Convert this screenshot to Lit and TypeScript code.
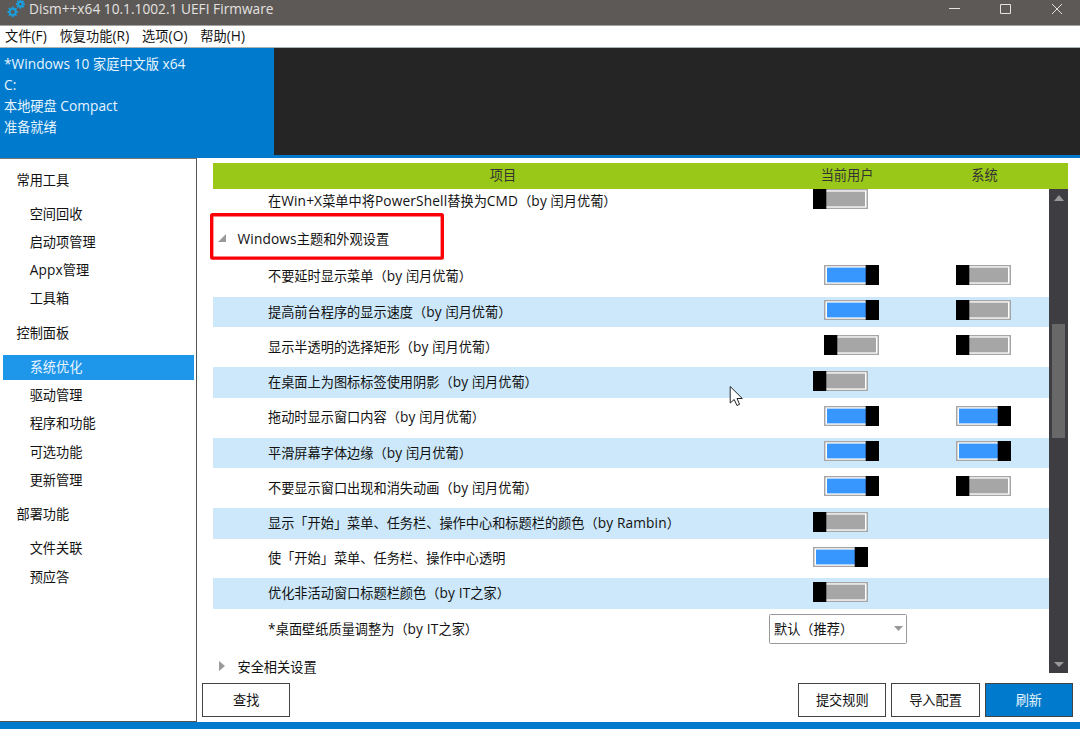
import { LitElement, html, css, svg, nothing } from "lit";
import { customElement, property } from "lit/decorators.js";
import { classMap } from "lit/directives/class-map.js";

type Toggle = boolean | undefined;
interface Row {
  label: string;
  user?: Toggle;
  system?: Toggle;
  choice?: string;
}

const NAV: { title: string; items: string[] }[] = [
  { title: "常用工具", items: ["空间回收", "启动项管理", "Appx管理", "工具箱"] },
  { title: "控制面板", items: ["系统优化", "驱动管理", "程序和功能", "可选功能", "更新管理"] },
  { title: "部署功能", items: ["文件关联", "预应答"] },
];

const ROWS: Row[] = [
  { label: "不要延时显示菜单（by 闰月优葡）", user: true, system: false },
  { label: "提高前台程序的显示速度（by 闰月优葡）", user: true, system: false },
  { label: "显示半透明的选择矩形（by 闰月优葡）", user: false, system: false },
  { label: "在桌面上为图标标签使用阴影（by 闰月优葡）", user: false },
  { label: "拖动时显示窗口内容（by 闰月优葡）", user: true, system: true },
  { label: "平滑屏幕字体边缘（by 闰月优葡）", user: true, system: true },
  { label: "不要显示窗口出现和消失动画（by 闰月优葡）", user: true, system: false },
  { label: "显示「开始」菜单、任务栏、操作中心和标题栏的颜色（by Rambin）", user: false },
  { label: "使「开始」菜单、任务栏、操作中心透明", user: true },
  { label: "优化非活动窗口标题栏颜色（by IT之家）", user: false },
  { label: "*桌面壁纸质量调整为（by IT之家）", choice: "默认（推荐）" },
];

// Latin runs are set slightly larger than the CJK text around them.
const mixed = (text: string) =>
  text
    .split(/([\x20-\x7e]+)/)
    .filter(Boolean)
    .map((part) => (/^[\x20-\x7e]/.test(part) ? html`<span class="latin">${part}</span>` : part));

const latin = css`
  .latin { font-size: 13.7px; letter-spacing: 0.15px; line-height: 1; white-space: pre; }
`;

@customElement("toggle-switch")
export class ToggleSwitch extends LitElement {
  @property({ type: Boolean }) on = false;

  static styles = css`
    :host { display: block; width: 55px; height: 20px; }
    svg { display: block; width: 55px; height: 20px; }
    .edge { fill: #a6a6a6; }
    .gap { fill: #fff; }
    .fill { fill: #a6a6a6; }
    .fill.on { fill: #3897ff; }
  `;

  render() {
    return html`<svg viewBox="0 0 55 20">
      <rect class="edge" width="55" height="20" />
      <rect class="gap" x="1.5" y="1.3" width="52" height="17.4" />
      <rect class=${classMap({ fill: true, on: this.on })} x="3" y="2.6" width="49" height="14.8" />
      <rect x=${this.on ? 41.7 : 0} width="13.3" height="20" />
    </svg>`;
  }
}

@customElement("option-row")
export class OptionRow extends LitElement {
  @property({ attribute: false }) row!: Row;
  @property({ type: Boolean }) band = false;

  static styles = [
    latin,
    css`
      :host { display: block; height: 30.6px; margin-bottom: 4.65px; flex: none; }
      .row { display: grid; grid-template-columns: 556px 156px 124px; height: 100%; }
      .band { background: #cce8fa; }
      .label { padding-left: 55px; line-height: 31px; white-space: nowrap; }
      .cell { padding-top: 3.6px; }
      .user { padding-left: 44px; }
      .both .user { padding-left: 54.7px; }
      .system { padding-left: 30.7px; }
      .combo {
        box-sizing: border-box; width: 138px; height: 30.6px; border: 1px solid #999;
        border-radius: 1.5px; background: #fff; display: flex; align-items: center;
        justify-content: space-between; padding: 0 3px 0 4px;
      }
      .choice { white-space: nowrap; padding-top: 1px; }
      .arrow { width: 9px; height: 5px; }
    `,
  ];

  render() {
    const r = this.row;
    const both = r.user !== undefined && r.system !== undefined;
    return html`<div class=${classMap({ row: true, band: this.band, both })}>
      <div class="label">${mixed(r.label)}</div>
      ${r.choice
        ? html`<div class="combo">
            <span class="choice">${r.choice}</span>
            <svg class="arrow" viewBox="0 0 9 5"><path d="M0 0H9L4.5 5Z" fill="#999" /></svg>
          </div>`
        : html`<div class="cell user"><toggle-switch ?on=${r.user}></toggle-switch></div>
            ${r.system === undefined
              ? nothing
              : html`<div class="cell system"><toggle-switch ?on=${r.system}></toggle-switch></div>`}`}
    </div>`;
  }
}

const gear = (cx: number, cy: number, r: number) => {
  const teeth = [0, 45, 90, 135, 180, 225, 270, 315];
  return svg`<g transform="translate(${cx} ${cy})">
    <circle r=${r - 0.5} fill="none" stroke="#1a9fdb" stroke-width="2.1"></circle>
    ${teeth.map(
      (a) => svg`<path transform="rotate(${a})" d="M0 ${-r} V${-r - 1.7}" stroke="#1a9fdb" stroke-width="1.9"></path>`
    )}
  </g>`;
};

@customElement("app-root")
export class AppRoot extends LitElement {
  static styles = [
    latin,
    css`
      :host {
        display: flex; flex-direction: column; position: relative; width: 1080px; height: 729px;
        overflow: hidden; background: #fff; color: #111;
        font: 13.2px/20px "Open Sans", "Noto Sans CJK SC", sans-serif;
      }
      .titlebar {
        box-sizing: border-box; height: 26px; flex: none; display: flex; background: #5d5956;
        border-bottom: 1px solid #a5a3a1; color: #e4e2e0; padding-left: 6px;
      }
      .logo { width: 20px; height: 20px; flex: none; }
      .title { flex: 1; margin-left: 3px; line-height: 19px; white-space: nowrap; }
      .title .latin { letter-spacing: 0.02px; }
      .controls { width: 140px; height: 20px; flex: none; }
      .menu {
        box-sizing: border-box; height: 22px; flex: none; display: flex; gap: 12.7px; padding-left: 5px;
        line-height: 21px; border-bottom: 1px solid #a9b3b5;
      }
      .hero { display: flex; height: 107px; flex: none; background: #252525; }
      .system-card {
        box-sizing: border-box; width: 274px; background: #007acc; color: #e8f5ff;
        padding: 5.6px 4px; line-height: 21.2px;
      }
      .system-card .latin { letter-spacing: 0.04px; }
      .rule { height: 3px; flex: none; background: #007acc; }
      .body { flex: 1; display: flex; min-height: 0; }
      .nav {
        box-sizing: border-box; width: 197px; flex: none; border-right: 1px solid #555;
        border-top: 1px solid #777; border-bottom: 1px solid #555; padding: 0.5px 2px 0 3px;
      }
      .nav-title { height: 40.7px; line-height: 40px; padding-left: 13.5px; }
      .nav-item {
        box-sizing: border-box; height: 24.6px; margin: 1.77px 0; padding-left: 26.7px; line-height: 25.4px;
      }
      .nav-list { display: flex; flex-direction: column; }
      .selected { background: #1e97ea; color: #e8f5ff; }
      .main { flex: 1; min-width: 0; display: flex; flex-direction: column; padding: 5px 0 0 5px; }
      .head {
        display: grid; grid-template-columns: 580px 108px 167px; width: 855px; height: 25.5px; margin-left: 11px;
        background: #9ac818; color: #333; text-align: center; line-height: 24px; flex: none;
      }
      .viewport { display: flex; width: 855px; height: 490px; margin-left: 11px; flex: none; }
      .list { width: 836px; overflow: hidden; display: flex; flex-direction: column; }
      .first { margin-top: -2.7px; }
      .group {
        height: 40.3px; flex: none; display: flex; align-items: center; padding: 0 0 4px 5px;
        box-sizing: border-box;
      }
      .group span { line-height: 18px; }
      .group svg { width: 9px; height: 10px; margin: -2px 10.5px 0 0; flex: none; }
      .scroll {
        box-sizing: border-box; width: 19px; height: 484.5px; background: #3e3e42; display: flex;
        flex-direction: column; align-items: center; padding: 6px 0 5px;
      }
      .scroll svg { width: 10px; height: 6px; flex: none; }
      .thumb { width: 13px; height: 114px; background: #686868; margin: 123.5px 0 auto; flex: none; }
      .footer { display: flex; margin-top: 4.5px; gap: 5px; padding-right: 7px; }
      .button {
        box-sizing: border-box; width: 88.3px; height: 34px; border: 1px solid #444; text-align: center;
        line-height: 32px; background: #fff;
      }
      .spacer { flex: 1; }
      .primary { background: #007acc; color: #e8f5ff; }
      .status { height: 7px; flex: none; background: #007acc; }
      .mark {
        position: absolute; left: 210px; top: 212.5px; width: 234px; height: 47px; overflow: visible;
      }
      .cursor { position: absolute; left: 729px; top: 385px; width: 15px; height: 23px; }
    `,
  ];

  render() {
    return html`
      <div class="titlebar">
        <svg class="logo" viewBox="0 0 20 20">${gear(6.7, 11.9, 3.6)}${gear(14.4, 4.2, 2.8)}</svg>
        <div class="title">${mixed("Dism++x64 10.1.1002.1 UEFI Firmware")}</div>
        <svg class="controls" viewBox="0 0 140 20" fill="none" stroke="#e4e2e0">
          <path d="M9 8.5H20M60.5 4.5H70.5V13.5H60.5ZM112 4L122 14M122 4L112 14" />
        </svg>
      </div>
      <div class="menu">
        ${["文件(F)", "恢复功能(R)", "选项(O)", "帮助(H)"].map((m) => html`<span>${mixed(m)}</span>`)}
      </div>
      <div class="hero">
        <div class="system-card">
          ${["*Windows 10 家庭中文版 x64", "C:", "本地硬盘 Compact", "准备就绪"].map((l) => html`<div>${mixed(l)}</div>`)}
        </div>
      </div>
      <div class="rule"></div>
      <div class="body">
        <div class="nav">
          ${NAV.map(
            (g) => html`<div class="nav-title">${g.title}</div>
              <div class="nav-list">
                ${g.items.map(
                  (i) => html`<div class=${classMap({ "nav-item": true, selected: i === "系统优化" })}>${mixed(i)}</div>`
                )}
              </div>`
          )}
        </div>
        <div class="main">
          <div class="head"><span>项目</span><span>当前用户</span><span>系统</span></div>
          <div class="viewport">
            <div class="list">
              <option-row class="first" .row=${{ label: "在Win+X菜单中将PowerShell替换为CMD（by 闰月优葡）", user: false }}></option-row>
              <div class="group">
                <svg viewBox="0 0 9 10"><path d="M8 1V9H0Z" fill="#999" /></svg>
                <span>${mixed("Windows主题和外观设置")}</span>
              </div>
              ${ROWS.map((r, i) => html`<option-row .row=${r} ?band=${i % 2 === 1}></option-row>`)}
              <div class="group">
                <svg viewBox="0 0 9 10"><path d="M1 0L7 5L1 10Z" fill="#999" /></svg>
                <span>安全相关设置</span>
              </div>
            </div>
            <div class="scroll">
              <svg viewBox="0 0 10 6"><path d="M0 6L5 0L10 6Z" fill="#999" /></svg>
              <div class="thumb"></div>
              <svg viewBox="0 0 10 6"><path d="M0 0H10L5 5Z" fill="#999" /></svg>
            </div>
          </div>
          <div class="footer">
            <div class="button">查找</div>
            <div class="spacer"></div>
            <div class="button">提交规则</div>
            <div class="button">导入配置</div>
            <div class="button primary">刷新</div>
          </div>
        </div>
      </div>
      <div class="status"></div>
      <svg class="mark" viewBox="0 0 234 47">
        <rect x="1.7" y="1.7" width="230.6" height="43.4" rx="0.8" fill="none" stroke="#fb0007" stroke-width="3.4" />
      </svg>
      <svg class="cursor" viewBox="0 0 15 23">
        <path d="M1.2 1.5V18L5.2 14.5L8 20.5L10.6 19.3L8 13.5H13.3Z" fill="#fff" stroke="#222" stroke-width="1" />
      </svg>
    `;
  }
}
